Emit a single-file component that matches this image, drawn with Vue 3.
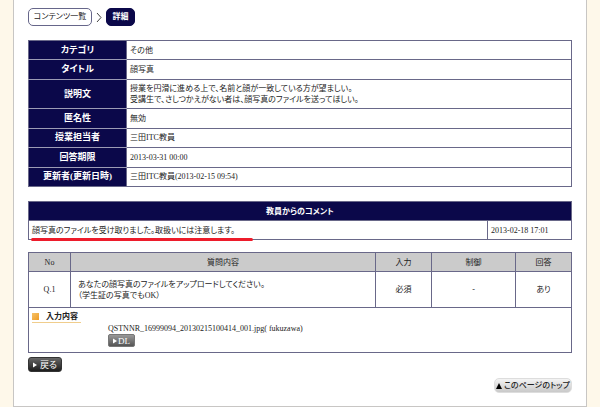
<script setup>
const details = [
  { label: 'カテゴリ', lines: ['その他'] },
  { label: 'タイトル', lines: ['顔写真'] },
  {
    label: '説明文',
    lines: [
      '授業を円滑に進める上で、名前と顔が一致している方が望ましい。',
      '受講生で、さしつかえがない者は、顔写真のファイルを送ってほしい。',
    ],
  },
  { label: '匿名性', lines: ['無効'] },
  { label: '授業担当者', lines: ['三田ITC教員'] },
  { label: '回答期限', lines: ['2013-03-31 00:00'] },
  { label: '更新者(更新日時)', lines: ['三田ITC教員(2013-02-15 09:54)'] },
]
</script>

<template>
  <main class="panel">
    <nav class="crumbs">
      <a class="crumb" href="#list">コンテンツ一覧</a>
      <svg class="chevron" viewBox="0 0 6 11" aria-hidden="true"><path d="M1 1 L5 5.5 L1 10" /></svg>
      <a class="crumb current" href="#detail">詳細</a>
    </nav>

    <table class="details">
      <tbody>
        <tr v-for="row in details" :key="row.label">
          <th scope="row">{{ row.label }}</th>
          <td :class="{ multi: row.lines.length > 1 }">
            <div v-for="line in row.lines" :key="line">{{ line }}</div>
          </td>
        </tr>
      </tbody>
    </table>

    <table class="comment">
      <colgroup>
        <col /><col class="c-limit" />
      </colgroup>
      <thead>
        <tr><th colspan="2">教員からのコメント</th></tr>
      </thead>
      <tbody>
        <tr>
          <td class="message">
            <span>顔写真のファイルを受け取りました。取扱いには注意します。</span>
            <i class="marker"></i>
          </td>
          <td>2013-02-18 17:01</td>
        </tr>
      </tbody>
    </table>

    <table class="questions">
      <colgroup>
        <col class="c-no" /><col /><col class="c-input" /><col class="c-limit" /><col class="c-input" />
      </colgroup>
      <thead>
        <tr><th>No</th><th>質問内容</th><th>入力</th><th>制御</th><th>回答</th></tr>
      </thead>
      <tbody>
        <tr class="question">
          <td>Q.1</td>
          <td class="body">
            <div>あなたの顔写真のファイルをアップロードしてください。</div>
            <div>（学生証の写真でもOK）</div>
          </td>
          <td>必須</td>
          <td>-</td>
          <td>あり</td>
        </tr>
        <tr>
          <td class="answer" colspan="5">
            <h2>入力内容</h2>
            <div class="file">
              <div>QSTNNR_16999094_20130215100414_001.jpg( fukuzawa)</div>
              <button class="btn dl" type="button">
                <svg viewBox="0 0 5 6" aria-hidden="true"><path d="M0 0 L5 3 L0 6Z" /></svg>DL
              </button>
            </div>
          </td>
        </tr>
      </tbody>
    </table>

    <button class="btn back" type="button">
      <svg viewBox="0 0 5 6" aria-hidden="true"><path d="M0 0 L5 3 L0 6Z" /></svg>戻る
    </button>
    <div class="foot">
      <a class="top" href="#app">
        <svg viewBox="0 0 6 6" aria-hidden="true"><path d="M3 0 L6 6 L0 6Z" /></svg>このページのトップ
      </a>
    </div>
  </main>
</template>

<style>
body {
  background: #fef8ea;
}
</style>

<style scoped>
.panel {
  margin: 0 13px;
  padding: 8px 14px 13px;
  background: #fff;
  border: 1px solid #c8c6c4;
  border-top: 0;
  font: 8px/11px "Liberation Serif", "Noto Sans CJK JP", serif;
  font-feature-settings: "palt";
  color: #222;
}
.crumbs {
  display: flex;
  align-items: center;
  gap: 4px;
  margin-bottom: 14px;
}
.crumb {
  box-sizing: border-box;
  min-width: 64px;
  height: 18px;
  border: 1px solid #66668a;
  border-radius: 5px;
  line-height: 16px;
  text-align: center;
  text-decoration: none;
  color: #222;
}
.crumb.current {
  min-width: 29px;
  border-color: #0b084a;
  background: #0b084a;
  color: #fff;
  font-weight: 700;
}
.chevron {
  width: 6px;
  height: 11px;
  fill: none;
  stroke: #444;
}
table {
  width: 100%;
  border-collapse: collapse;
  table-layout: fixed;
  margin-bottom: 14px;
}
th,
td {
  box-sizing: border-box;
  height: 19px;
  padding: 0 3px;
  border: 1px solid #696889;
}
.details {
  height: 147px;
}
.details th,
.comment th {
  background: #0b084a;
  color: #fff;
}
.details th {
  width: 98px;
  font-size: 9px;
  border-bottom-color: #9c9bb5;
}
.details tr:last-child th {
  border-bottom-color: #696889;
}
.details .multi {
  height: 29px;
}
.comment {
  margin-bottom: 12px;
}
.message {
  position: relative;
}
.marker {
  position: absolute;
  left: 2px;
  bottom: -2px;
  width: 222px;
  height: 3px;
  border-radius: 2px;
  background: #ed1c2b;
}
.questions {
  margin-bottom: 4px;
}
.questions th {
  background: #cbcbcb;
  font-weight: 400;
}
.c-no {
  width: 42px;
}
.c-input {
  width: 56px;
}
.c-limit {
  width: 84px;
}
.question td {
  height: 36px;
  text-align: center;
}
.question .body {
  padding-left: 7px;
  text-align: left;
}
.answer {
  height: 45px;
  padding: 3px;
  vertical-align: top;
}
h2 {
  display: flex;
  align-items: center;
  gap: 7px;
  width: 49px;
  margin: 0;
  border-bottom: 1px solid #f0cd8c;
  font-size: 8px;
  line-height: 11px;
  white-space: nowrap;
}
h2::before {
  content: "";
  width: 7px;
  height: 7px;
  background: linear-gradient(135deg, #f5c269, #ee9c26);
}
.file {
  padding-left: 76px;
}
.btn {
  display: flex;
  align-items: center;
  justify-content: center;
  gap: 3px;
  padding: 0;
  border: 1px solid #555;
  border-radius: 2px;
  font-family: inherit;
  font-feature-settings: inherit;
  color: #fff;
  background: linear-gradient(#777, #333);
}
.btn svg {
  width: 4px;
  height: 6px;
  fill: #fff;
}
.dl {
  width: 27px;
  height: 13px;
  gap: 1px;
  border-color: #777;
  background: linear-gradient(#999, #555);
  font-size: 9px;
}
.back {
  width: 34px;
  height: 15px;
  border-color: #333;
  border-radius: 3px;
  background: linear-gradient(#666, #1d1d1d);
  font-size: 9px;
}
.foot {
  display: flex;
  justify-content: flex-end;
  padding-top: 6px;
}
.top {
  display: flex;
  align-items: center;
  justify-content: center;
  gap: 2px;
  width: 76px;
  height: 13px;
  border: 1px solid #ddd;
  border-radius: 5px;
  background: linear-gradient(#f4f4f4, #c9c9c9);
  color: #222;
  font-size: 8px;
  font-weight: 500;
  text-decoration: none;
  white-space: nowrap;
}
.top svg {
  width: 6px;
  height: 6px;
}
</style>
